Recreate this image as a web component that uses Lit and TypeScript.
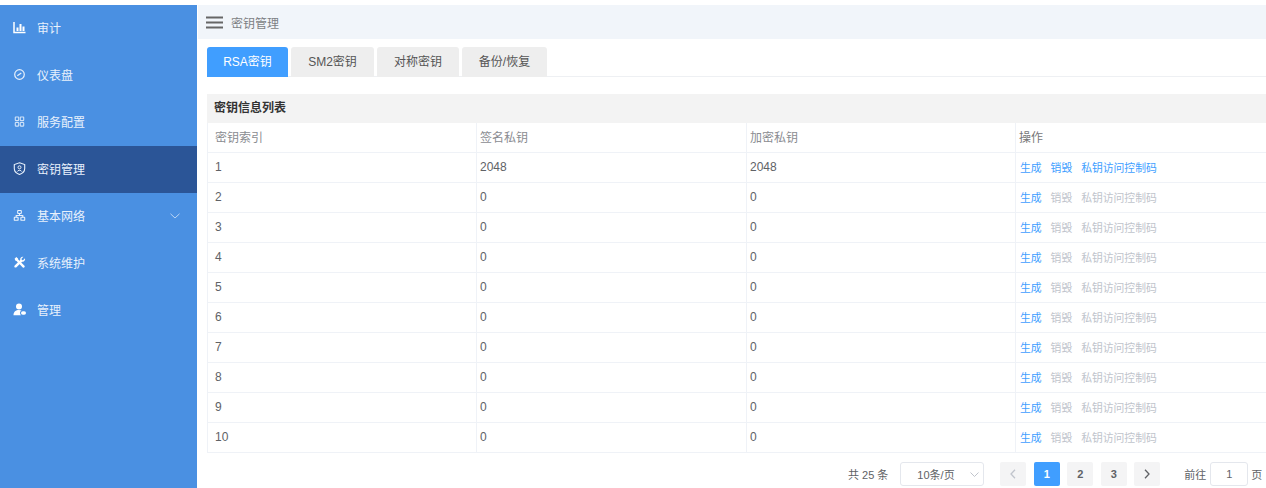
import { LitElement, html, css, svg } from "lit";
import { customElement } from "lit/decorators.js";

const icons: Record<string, unknown> = {
  chart: svg`<path d="M1 1v10.500h11.500" fill="none" stroke="currentColor" stroke-width="1.500"/><path d="M3.500 6.500h2V10h-2zM6.500 3h2v7h-2zM9.500 5.500h2V10h-2z" fill="currentColor"/>`,
  gauge: svg`<circle cx="6.500" cy="6.500" r="4.800" fill="none" stroke="currentColor" stroke-width="1.200"/><path d="M4.300 7.800 8.300 5" stroke="currentColor" stroke-width="1.200"/>`,
  grid: svg`<g fill="none" stroke="currentColor" stroke-width="1.100" stroke-opacity=".85"><rect x="2.300" y="2" width="3.400" height="3.600" rx=".5"/><rect x="7.300" y="2" width="3.400" height="3.600" rx=".5"/><rect x="2.300" y="7.500" width="3.400" height="3.600" rx=".5"/><rect x="7.300" y="7.500" width="3.400" height="3.600" rx=".5"/></g>`,
  shield: svg`<path d="M6.500.800 11.700 2.600V6.500c0 3-2.300 5-5.200 6-2.900-1-5.200-3-5.200-6V2.600Z" fill="none" stroke="currentColor" stroke-width="1.100"/><circle cx="6.500" cy="5.300" r="1.500" fill="none" stroke="currentColor"/><path d="M4.200 9.600c.5-1.700 4.100-1.700 4.600 0" fill="none" stroke="currentColor"/>`,
  network: svg`<g fill="none" stroke="currentColor" stroke-width="1.100"><rect x="4.700" y="1.500" width="3.600" height="3" rx=".4"/><rect x="1.300" y="8.300" width="3.800" height="3" rx=".4"/><rect x="7.900" y="8.300" width="3.800" height="3" rx=".4"/><path d="M6.500 4.500v2M3.200 8.300V6.500h6.600v1.800"/></g>`,
  tools: svg`<path d="M1.600 2.700 3.300 1 5 2.400l.2 1 6.300 6.300c.9 1-.6 2.600-1.700 1.700L3.500 5l-1-.3Z" fill="currentColor"/><path d="M12 2.300 10 4.200 8.800 3.900 8.500 2.700 10.400.8C8.600.3 6.800 1.900 7.200 3.900L1.700 9.400c-1.200 1.300.5 3 1.800 1.800l5.600-5.500c2 .4 3.500-1.500 2.900-3.400Z" fill="currentColor"/>`,
  user: svg`<circle cx="6" cy="3.500" r="3" fill="currentColor"/><path d="M.5 12.300c0-3.500 2.300-5.300 5.500-5.300 1 0 1.800.2 2.500.5-1 .5-1.500 1.400-1.500 2.300 0 1 .4 1.900 1 2.500Z" fill="currentColor"/><rect x="8" y="8.200" width="5" height="3.600" rx="1.800" fill="currentColor"/>`,
};

const menu = [
  ["chart", "审计"],
  ["gauge", "仪表盘"],
  ["grid", "服务配置"],
  ["shield", "密钥管理"],
  ["network", "基本网络"],
  ["tools", "系统维护"],
  ["user", "管理"],
];

const rows = [1, 2, 3, 4, 5, 6, 7, 8, 9, 10];

@customElement("app-root")
export class AppRoot extends LitElement {
  static styles = css`
    :host {
      display: block;
      width: 1266px;
      height: 488px;
      overflow: hidden;
      background: #fff;
      font-family: "Liberation Sans", "Noto Sans CJK SC", sans-serif;
      font-size: 12px;
      color: #606266;
    }
    .page { display: flex; height: 488px; padding-top: 5px; box-sizing: border-box; }
    .side { width: 197px; flex: none; background: #4a90e2; color: #e8f1fc; }
    .item { height: 47px; display: flex; align-items: center; padding: 0 0 2px 13px; box-sizing: border-box; font-size: 12px; position: relative; }
    .item.active { background: #2b5597; }
    .item svg.ic { width: 13px; height: 13px; margin-right: 11px; flex: none; }
    .item .solid { color: #fff; }
    .item .caret { position: absolute; left: 170px; top: 20px; width: 10px; height: 6px; }
    .main { flex: 1; min-width: 0; padding-left: 1px; display: flex; flex-direction: column; }
    .bar { height: 34px; background: #f1f5fa; display: flex; align-items: center; padding-left: 8px; color: #7d7f84; }
    .bar svg { width: 17px; height: 13px; margin-right: 8px; }
    .content { padding-left: 9px; }
    .tabs { display: flex; gap: 3px; margin-top: 8px; height: 30px; box-sizing: border-box; border-bottom: 1px solid #eef0f3; }
    .tab { height: 30px; line-height: 30px; text-align: center; background: #eeeeee; border-radius: 3px 3px 0 0; color: #555; font-size: 12px; box-sizing: border-box; flex: none; }
    .tab.on { background: #409eff; color: #fff; }
    .title { margin-top: 17px; height: 29px; line-height: 28px; background: #f3f3f3; padding-left: 7px; font-weight: 700; color: #333; font-size: 12px; }
    .table { display: grid; grid-template-columns: 269px 270px 269px 251px; }
    .cell { height: 30px; box-sizing: border-box; border-bottom: 1px solid #eff2f7; border-left: 1px solid #eff2f7; padding: 0 0 2px 3px; display: flex; align-items: center; font-size: 12px; color: #606266; white-space: nowrap; }
    .cell.first { padding-left: 7px; }
    .cell.head { color: #8a8c91; }
    .cell.op { padding-left: 4px; font-size: 10.800px; gap: 9px; }
    .cell.op.head { padding-left: 3px; font-size: 12px; color: #777; }
    .link { color: #409eff; }
    .off { color: #c0c4cc; }
    .pager { display: flex; align-items: center; height: 24px; margin-top: 9px; padding-left: 641px; font-size: 11px; color: #606266; }
    .select { width: 84px; height: 24px; margin-left: 12px; box-sizing: border-box; border: 1px solid #e4e7ed; border-radius: 3px; padding-left: 16px; display: flex; align-items: center; position: relative; }
    .select svg { position: absolute; right: 4px; top: 9px; width: 9px; height: 5px; }
    .btn { width: 26px; height: 24px; background: #f4f4f5; border-radius: 2px; display: flex; align-items: center; justify-content: center; font-weight: 700; color: #606266; margin-left: 7.500px; font-size: 11px; }
    .btn.first { margin-left: 16px; }
    .btn.on { background: #409eff; color: #fff; }
    .btn svg { width: 6px; height: 10px; }
    .btn.dim { color: #c0c4cc; }
    .goto { margin-left: 24px; }
    .input { width: 38px; height: 24px; margin: 0 3px 0 4px; box-sizing: border-box; border: 1px solid #e4e7ed; border-radius: 3px; display: flex; align-items: center; justify-content: center; }
  `;

  render() {
    const chev = (d: string) => html`<svg viewBox="0 0 6 10"><path d=${d} fill="none" stroke="currentColor" stroke-width="1.300"/></svg>`;
    return html`<div class="page">
      <nav class="side">
        ${menu.map(([ic, label], i) => html`<div class="item ${i === 3 ? "active" : ""}">
          <svg class="ic ${ic === "tools" || ic === "user" || ic === "chart" ? "solid" : ""}" viewBox="0 0 13 13">${icons[ic]}</svg>
          <span>${label}</span>
          ${ic === "network" ? html`<svg class="caret" viewBox="0 0 10 6"><path d="M.5.800 5 5 9.500.800" fill="none" stroke="currentColor" stroke-opacity=".7"/></svg>` : ""}
        </div>`)}
      </nav>
      <div class="main">
        <div class="bar">
          <svg viewBox="0 0 17 13"><path d="M0 1.500h17M0 6.500h17M0 11.500h17" stroke="#666" stroke-width="1.800"/></svg>
          <span>密钥管理</span>
        </div>
        <div class="content">
          <div class="tabs">
            <div class="tab on" style="width:81px">RSA密钥</div>
            <div class="tab" style="width:83px">SM2密钥</div>
            <div class="tab" style="width:82px">对称密钥</div>
            <div class="tab" style="width:85px">备份/恢复</div>
          </div>
          <div class="title">密钥信息列表</div>
          <div class="table">
            <div class="cell head first">密钥索引</div>
            <div class="cell head">签名私钥</div>
            <div class="cell head">加密私钥</div>
            <div class="cell head op">操作</div>
            ${rows.map((n) => html`
              <div class="cell first">${n}</div>
              <div class="cell">${n === 1 ? 2048 : 0}</div>
              <div class="cell">${n === 1 ? 2048 : 0}</div>
              <div class="cell op">
                <span class="link">生成</span>
                <span class=${n === 1 ? "link" : "off"}>销毁</span>
                <span class=${n === 1 ? "link" : "off"}>私钥访问控制码</span>
              </div>`)}
          </div>
          <div class="pager">
            <span>共 25 条</span>
            <div class="select">10条/页
              <svg viewBox="0 0 9 5"><path d="M.500.500 4.500 4.500 8.500.500" fill="none" stroke="#c0c4cc"/></svg>
            </div>
            <div class="btn first dim">${chev("M5 .8 1 5l4 4.200")}</div>
            <div class="btn on">1</div>
            <div class="btn">2</div>
            <div class="btn">3</div>
            <div class="btn">${chev("M1 .8 5 5 1 9.200")}</div>
            <span class="goto">前往</span>
            <div class="input">1</div>
            <span>页</span>
          </div>
        </div>
      </div>
    </div>`;
  }
}
